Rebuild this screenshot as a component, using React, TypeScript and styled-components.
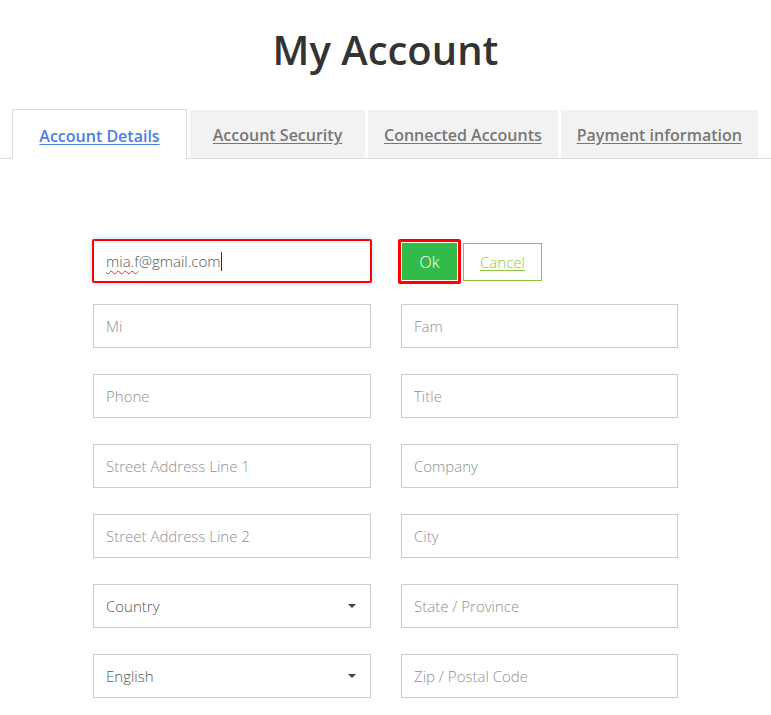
import React from 'react'
import styled, { createGlobalStyle } from 'styled-components'

const GlobalStyle = createGlobalStyle`
  body {
    margin: 0;
    background: #fff;
    font-family: 'Open Sans', 'Liberation Sans', sans-serif;
  }
`

const tabs = [
  { label: 'Account Details', active: true },
  { label: 'Account Security', active: false },
  { label: 'Connected Accounts', active: false },
  { label: 'Payment information', active: false }
]

const rows = [
  ['Mi', 'Fam'],
  ['Phone', 'Title'],
  ['Street Address Line 1', 'Company'],
  ['Street Address Line 2', 'City']
]

const App: React.FC = () => {
  return (
    <StyledPage>
      <GlobalStyle />
      <StyledTitle>My Account</StyledTitle>
      <StyledTabs>
        {tabs.map(tab => (
          <StyledTab key={tab.label} active={tab.active}>
            <a href="#">{tab.label}</a>
          </StyledTab>
        ))}
      </StyledTabs>
      <StyledForm>
        <StyledEditRow>
          <StyledEmail>
            <StyledTypo>mia.f</StyledTypo>@gmail.com
            <StyledCaret />
          </StyledEmail>
          <StyledActions>
            <StyledOk>Ok</StyledOk>
            <StyledCancel>Cancel</StyledCancel>
          </StyledActions>
        </StyledEditRow>
        {rows.map(([left, right]) => (
          <StyledRow key={left}>
            <StyledInput placeholder={left} />
            <StyledInput placeholder={right} />
          </StyledRow>
        ))}
        <StyledRow>
          <StyledSelect>
            Country
            <StyledArrow />
          </StyledSelect>
          <StyledInput placeholder="State / Province" />
        </StyledRow>
        <StyledRow>
          <StyledSelect>
            English
            <StyledArrow />
          </StyledSelect>
          <StyledInput placeholder="Zip / Postal Code" />
        </StyledRow>
      </StyledForm>
    </StyledPage>
  )
}

const StyledPage = styled.div`
  width: 771px;
  padding-top: 22px;
`

const StyledTitle = styled.h1`
  margin: 0;
  text-align: center;
  font-size: 40px;
  font-weight: 600;
  line-height: 56px;
  color: #333;
`

const StyledTabs = styled.div`
  display: flex;
  align-items: flex-end;
  gap: 3px;
  margin-top: 32px;
  padding-left: 12px;
  border-bottom: 1px solid #ddd;
  height: 48px;
`

const StyledTab = styled.div<{ active: boolean }>`
  box-sizing: border-box;
  display: flex;
  align-items: center;
  justify-content: center;
  min-width: 175px;
  padding: 2px 16px 0;
  height: ${props => (props.active ? '50px' : '48px')};
  margin-bottom: ${props => (props.active ? '-1px' : '0')};
  background: ${props => (props.active ? '#fff' : '#f2f2f2')};
  border: ${props => (props.active ? '1px solid #ddd' : 'none')};
  border-bottom: none;

  a {
    font-size: 16px;
    font-weight: 600;
    color: ${props => (props.active ? '#4a7de6' : '#777')};
    text-decoration: underline;
    text-underline-offset: 2px;
  }
`

const StyledForm = styled.div`
  width: 585px;
  margin: 80px 0 0 93px;
  display: flex;
  flex-direction: column;
  gap: 26px;
`

const StyledRow = styled.div`
  display: grid;
  grid-template-columns: 278px 277px;
  column-gap: 30px;
  height: 44px;
`

const StyledEditRow = styled(StyledRow)`
  margin-bottom: -5px;
`

const StyledInput = styled.input`
  box-sizing: border-box;
  width: 100%;
  height: 44px;
  margin: 0;
  padding: 0 12px;
  border: 1px solid #ccc;
  border-radius: 0;
  font-family: inherit;
  font-size: 15px;
  font-weight: 300;
  color: #555;
  outline: none;

  &::placeholder {
    color: #8f8f8f;
  }
`

const StyledEmail = styled.div`
  box-sizing: border-box;
  display: flex;
  align-items: center;
  height: 44px;
  margin-left: -1px;
  width: 280px;
  padding: 0 12px;
  border: 2px solid #f00;
  border-radius: 2px;
  box-shadow: 0 0 6px rgba(102, 175, 233, 0.45);
  font-size: 15px;
  font-weight: 300;
  color: #555;
`

const StyledTypo = styled.span`
  text-decoration: underline wavy #e03030;
  text-decoration-thickness: 1px;
  text-underline-offset: 3px;
`

const StyledCaret = styled.span`
  display: inline-block;
  width: 1px;
  height: 19px;
  margin-left: 1px;
  background: #333;
`

const StyledActions = styled.div`
  display: flex;
  align-items: center;
  gap: 2px;
  margin-left: -3px;
`

const StyledOk = styled.div`
  box-sizing: border-box;
  display: flex;
  align-items: center;
  justify-content: center;
  width: 63px;
  height: 45px;
  border: 3px solid #f00;
  border-radius: 2px;
  background: #33bb4a;
  box-shadow: inset 0 0 0 1px #fff;
  font-size: 16px;
  font-weight: 300;
  color: #fff;
`

const StyledCancel = styled.div`
  box-sizing: border-box;
  display: flex;
  align-items: center;
  justify-content: center;
  width: 79px;
  height: 38px;
  border: 1px solid #8cc63f;
  font-size: 15px;
  font-weight: 300;
  color: #8cc63f;
  text-decoration: underline;
  text-underline-offset: 2px;
`

const StyledSelect = styled.div`
  box-sizing: border-box;
  position: relative;
  display: flex;
  align-items: center;
  height: 44px;
  padding: 0 12px;
  border: 1px solid #ccc;
  font-size: 15px;
  font-weight: 300;
  color: #555;
`

const StyledArrow = styled.span`
  position: absolute;
  right: 14px;
  top: 19px;
  width: 0;
  height: 0;
  border-left: 4px solid transparent;
  border-right: 4px solid transparent;
  border-top: 4px solid #444;
`

export default App
